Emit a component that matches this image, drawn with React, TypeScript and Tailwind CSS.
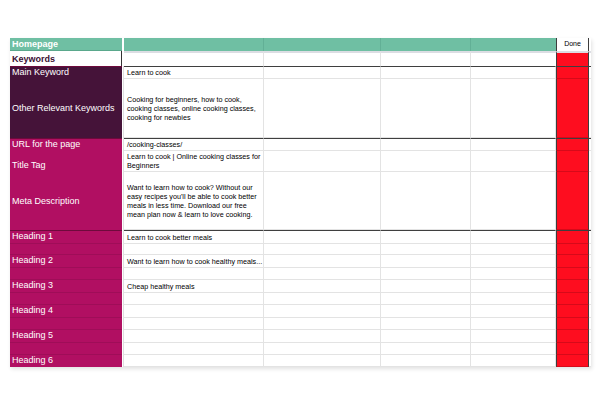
import React from "react";

const grid = "grid grid-cols-[112px_2px_140px_117px_90px_85px_33px_2px]";

type RowProps = {
  h: string;
  tone: "dark" | "pink";
  label?: React.ReactNode;
  value?: React.ReactNode;
  thick?: boolean;
  center?: boolean;
  split?: boolean;
};

function Row({ h, tone, label, value, thick, center, split }: RowProps) {
  const bg = tone === "dark" ? "bg-[#451339]" : "bg-[#b10f62]";
  const top = thick ? "border-t border-t-[#3f3f3f]" : "";
  const cell = `border-b border-r border-[#e3e3e3] ${top}`;
  return (
    <div className={`${grid} ${h}`}>
      <div
        className={`${bg} ${split ? "border-b border-black/10" : ""} ${thick ? "border-t border-t-[#6e0a3c]" : ""} flex ${
          center ? "items-center" : "items-end pb-[1px]"
        } pl-[2px] text-[9px] leading-[11px] text-white`}
      >
        {label}
      </div>
      <div className="bg-white border-r border-[#dedede]" />
      <div
        className={`${cell} relative z-10 flex ${center ? "items-center" : "items-end pb-[1px]"} pl-[3px] text-[7.2px] leading-[9px] text-black whitespace-nowrap`}
      >
        {value}
      </div>
      <div className={cell} />
      <div className={cell} />
      <div className={cell} />
      <div className={`bg-[#fe0d1f] border-x border-x-[#3d3d3d] border-b border-b-[#d60a1a] ${top}`} />
      <div className={`border-b border-[#e3e3e3] ${top}`} />
    </div>
  );
}

export default function App() {
  return (
    <div className="min-h-screen bg-white pt-[38px] pl-[10px] font-['Liberation_Sans',Arial,sans-serif]">
      <div className="w-[581px] shadow-[1px_2px_4px_rgba(0,0,0,0.12)]">
        {/* title row */}
        <div className={`${grid} h-[13px]`}>
          <div className="bg-[#6fbfa3] border-b border-[#5aa88c] pl-[2px] flex items-end text-[9px] leading-[11px] font-bold text-white">
            Homepage
          </div>
          <div className="bg-white" />
          <div className="bg-[#6fbfa3] border-r border-[#62b096]" />
          <div className="bg-[#6fbfa3] border-r border-[#62b096]" />
          <div className="bg-[#6fbfa3] border-r border-[#62b096]" />
          <div className="bg-[#6fbfa3]" />
          <div className="bg-white border-x border-[#3d3d3d] flex items-center justify-center text-[7px] text-black">
            Done
          </div>
          <div className="bg-white" />
        </div>

        {/* section row */}
        <div className={`${grid} h-[15px]`}>
          <div className="bg-white border-r border-[#333] pl-[2px] flex items-end pb-[1px] text-[9px] leading-[11px] font-bold text-[#3b0f33]">
            Keywords
          </div>
          <div className="bg-white" />
          <div className="border-t-2 border-t-[#dcdde3] border-r border-r-[#e3e3e3]" />
          <div className="border-t-2 border-t-[#dcdde3] border-r border-r-[#e3e3e3]" />
          <div className="border-t-2 border-t-[#dcdde3] border-r border-r-[#e3e3e3]" />
          <div className="border-t-2 border-t-[#dcdde3]" />
          <div className="bg-[#fe0d1f] border-t-2 border-t-[#dcdde3] border-x border-x-[#3d3d3d]" />
          <div className="border-t-2 border-t-[#dcdde3]" />
        </div>

        <Row h="h-[13px]" tone="dark" thick label="Main Keyword" value="Learn to cook" />
        <Row
          h="h-[59px]"
          tone="dark"
          center
          label="Other Relevant Keywords"
          value={
            <span>
              Cooking for beginners, how to cook,
              <br />
              cooking classes, online cooking classes,
              <br />
              cooking for newbies
            </span>
          }
        />
        <Row h="h-[13px]" tone="pink" thick label="URL for the page" value="/cooking-classes/" />
        <Row
          h="h-[21px]"
          tone="pink"
          label="Title Tag"
          value={
            <span>
              Learn to cook | Online cooking classes for
              <br />
              Beginners
            </span>
          }
        />
        <Row
          h="h-[58px]"
          tone="pink"
          center
          label="Meta Description"
          value={
            <span>
              Want to learn how to cook? Without our
              <br />
              easy recipes you'll be able to cook better
              <br />
              meals in less time. Download our free
              <br />
              mean plan now &amp; learn to love cooking.
            </span>
          }
        />

        <Row h="h-[14px]" tone="pink" thick split label="Heading 1" value="Learn to cook better meals" />
        <Row h="h-[11px]" tone="pink" split />
        <Row h="h-[13px]" tone="pink" split label="Heading 2" value="Want to learn how to cook healthy meals..." />
        <Row h="h-[12px]" tone="pink" split />
        <Row h="h-[13px]" tone="pink" split label="Heading 3" value="Cheap healthy meals" />
        <Row h="h-[12px]" tone="pink" split />
        <Row h="h-[13px]" tone="pink" split label="Heading 4" />
        <Row h="h-[12px]" tone="pink" split />
        <Row h="h-[13px]" tone="pink" split label="Heading 5" />
        <Row h="h-[12px]" tone="pink" split />
        <Row h="h-[12px]" tone="pink" label="Heading 6" />
      </div>
    </div>
  );
}
